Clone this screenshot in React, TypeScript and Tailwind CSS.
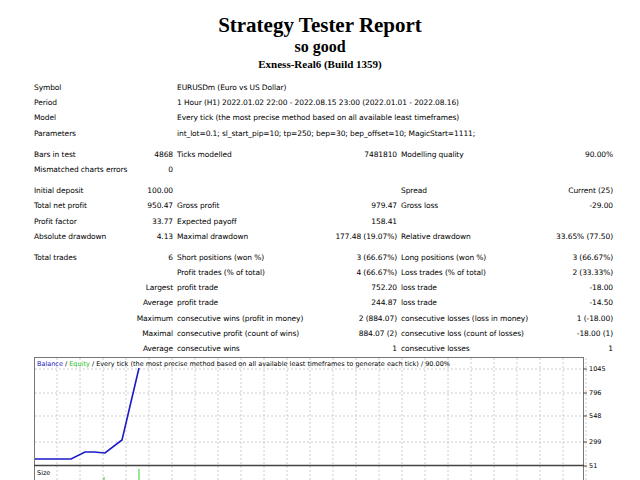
import React from "react";

type R = { a?: string; b?: string; c?: string; d?: string; e?: string; f?: string; mt?: number; span?: boolean };
const rows: R[] = [
  { a: "Symbol", c: "EURUSDm (Euro vs US Dollar)", span: true },
  { a: "Period", c: "1 Hour (H1) 2022.01.02 22:00 - 2022.08.15 23:00 (2022.01.01 - 2022.08.16)", span: true },
  { a: "Model", c: "Every tick (the most precise method based on all available least timeframes)", span: true },
  { a: "Parameters", c: "int_lot=0.1; sl_start_pip=10; tp=250; bep=30; bep_offset=10; MagicStart=1111;", span: true },
  { a: "Bars in test", b: "4868", c: "Ticks modelled", d: "7481810", e: "Modelling quality", f: "90.00%", mt: 6 },
  { a: "Mismatched charts errors", b: "0" },
  { a: "Initial deposit", b: "100.00", e: "Spread", f: "Current (25)", mt: 6 },
  { a: "Total net profit", b: "950.47", c: "Gross profit", d: "979.47", e: "Gross loss", f: "-29.00" },
  { a: "Profit factor", b: "33.77", c: "Expected payoff", d: "158.41" },
  { a: "Absolute drawdown", b: "4.13", c: "Maximal drawdown", d: "177.48 (19.07%)", e: "Relative drawdown", f: "33.65% (77.50)" },
  { a: "Total trades", b: "6", c: "Short positions (won %)", d: "3 (66.67%)", e: "Long positions (won %)", f: "3 (66.67%)", mt: 6 },
  { c: "Profit trades (% of total)", d: "4 (66.67%)", e: "Loss trades (% of total)", f: "2 (33.33%)" },
  { b: "Largest", c: "profit trade", d: "752.20", e: "loss trade", f: "-18.00" },
  { b: "Average", c: "profit trade", d: "244.87", e: "loss trade", f: "-14.50" },
  { b: "Maximum", c: "consecutive wins (profit in money)", d: "2 (884.07)", e: "consecutive losses (loss in money)", f: "1 (-18.00)" },
  { b: "Maximal", c: "consecutive profit (count of wins)", d: "884.07 (2)", e: "consecutive loss (count of losses)", f: "-18.00 (1)" },
  { b: "Average", c: "consecutive wins", d: "1", e: "consecutive losses", f: "1" },
];

export default function App() {
  const vx = Array.from({ length: 24 }, (_, i) => 57 + i * 23);
  const hy = [369, 393, 416, 442];
  return (
    <div className="w-[640px] h-[480px] bg-white overflow-hidden relative text-black" style={{ fontFamily: '"DejaVu Sans", sans-serif' }}>
      <div className="flex flex-col items-center pt-[13px]" style={{ fontFamily: '"Liberation Serif", serif' }}>
        <div className="text-[21px] font-bold leading-[24px]">Strategy Tester Report</div>
        <div className="text-[16px] font-bold leading-[18px] mt-[1px]">so good</div>
        <div className="text-[11px] font-bold leading-[14px] mt-[1px]">Exness-Real6 (Build 1359)</div>
      </div>
      <div className="pl-[34px] mt-[9px] text-[7.5px] leading-[15.2px] tracking-[-0.1px]">
        {rows.map((r, i) => (
          <div key={i} className="flex h-[15.2px]" style={{ marginTop: r.mt ? r.mt : 0 }}>
            <div className="w-[139px] flex justify-between">
              <span>{r.a}</span>
              <span>{r.b}</span>
            </div>
            {r.span ? (
              <div className="pl-[4px] whitespace-nowrap">{r.c}</div>
            ) : (
              <>
                <div className="w-[224px] pl-[4px] flex justify-between">
                  <span>{r.c}</span>
                  <span>{r.d}</span>
                </div>
                <div className="w-[216px] pl-[4px] flex justify-between">
                  <span>{r.e}</span>
                  <span>{r.f}</span>
                </div>
              </>
            )}
          </div>
        ))}
      </div>
      <svg className="absolute left-0 top-0" width="640" height="480">
        <rect x="34.5" y="357.5" width="549" height="123" fill="none" stroke="#777" />
        {vx.map((x) => (
          <line key={x} x1={x} y1={358} x2={x} y2={480} stroke="#ccc" strokeDasharray="2 2" />
        ))}
        {hy.map((y) => (
          <line key={y} x1={35} y1={y} x2={583} y2={y} stroke="#ccc" strokeDasharray="2 2" />
        ))}
        <line x1={34} y1={465.5} x2={584} y2={465.5} stroke="#444" strokeWidth="1.5" />
        {[369, 393, 416, 442, 466].map((y) => (
          <line key={y} x1={583} y1={y} x2={587} y2={y} stroke="#444" />
        ))}
        <polyline points="35,459 71,459 85,452 94,452 105,453 122,440 139,368" fill="none" stroke="#1a1ac8" strokeWidth="1.6" />
        <line x1={139} y1={469} x2={139} y2={480} stroke="#3c3" />
        <line x1={104} y1={477} x2={104} y2={480} stroke="#3c3" />
      </svg>
      <div className="absolute left-[37px] top-[360px] text-[6.5px] leading-[8px] whitespace-nowrap">
        <span className="text-[#2020c0]">Balance</span> / <span className="text-[#20c020]">Equity</span> / Every tick (the most precise method based on all available least timeframes to generate each tick) / 90.00%
      </div>
      <div className="absolute left-[37px] top-[469px] text-[6.5px] leading-[8px]">Size</div>
      {[["1045", 365], ["796", 389], ["548", 412], ["299", 438], ["51", 462]].map(([t, y]) => (
        <div key={t} className="absolute left-[589px] text-[6.5px] leading-[8px]" style={{ top: y as number }}>{t}</div>
      ))}
    </div>
  );
}
